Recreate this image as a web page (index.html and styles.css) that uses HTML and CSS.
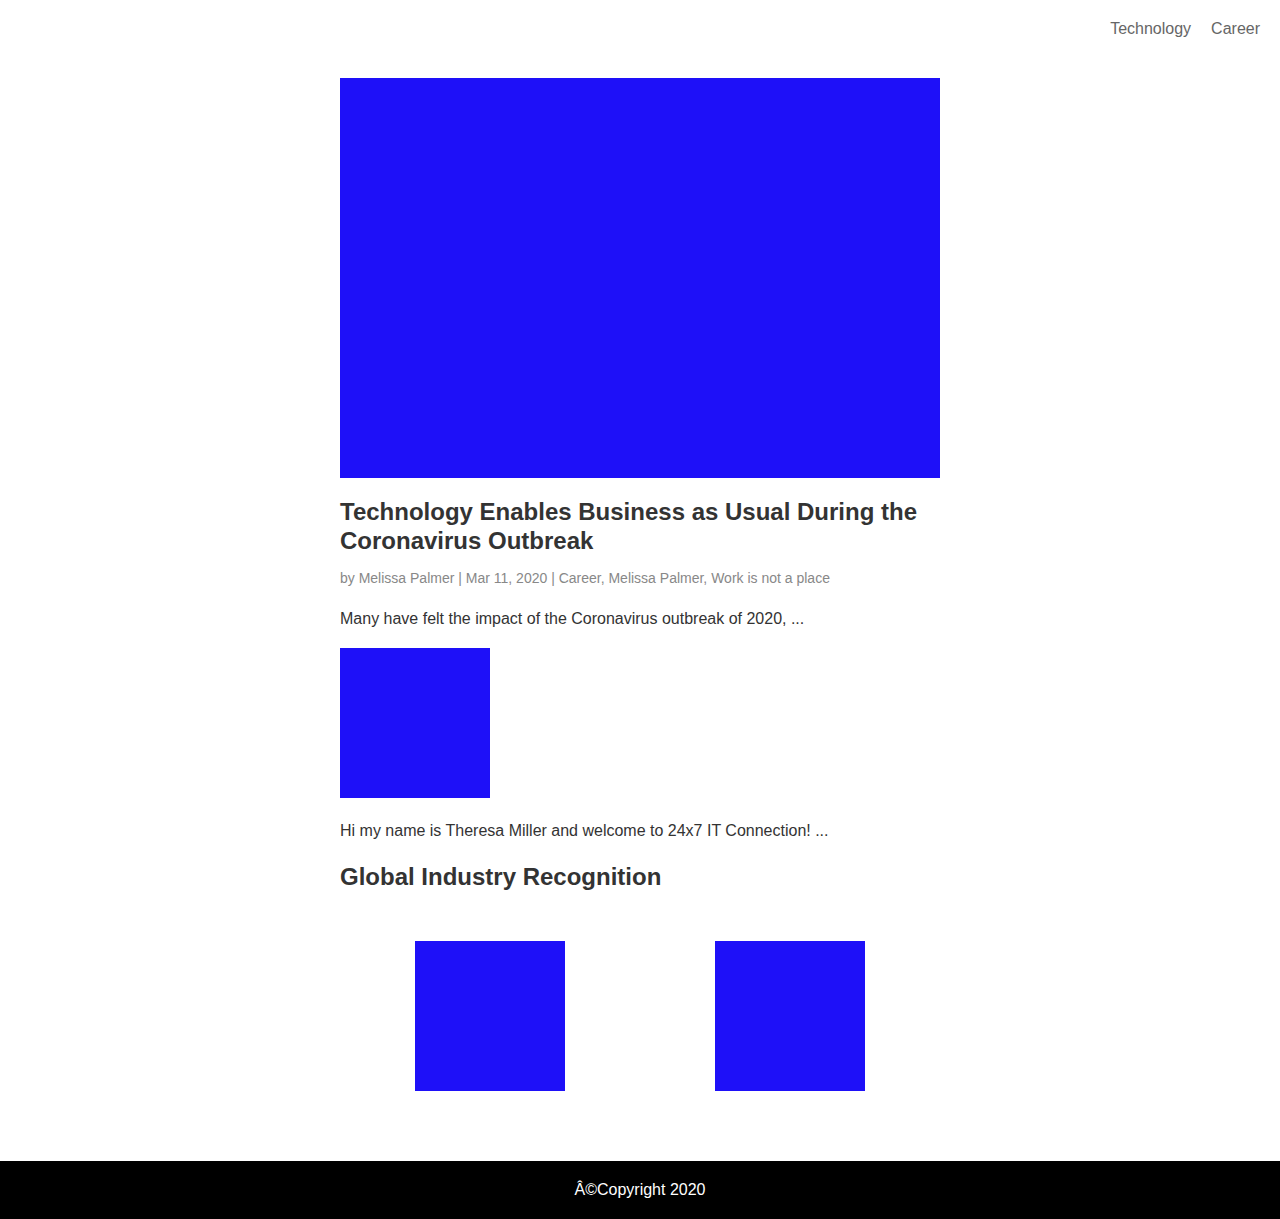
FILE: index.html
```html
<!DOCTYPE html>
<html>
<head>
<meta charset="utf-8">
<link rel="stylesheet" href="styles.css">
</head>
<body>
<header class="header">
  <nav class="nav">
    <a class="nav-link" href="#">Technology</a>
    <a class="nav-link" href="#">Career</a>
  </nav>
</header>
<main class="main">
  <article class="post">
    <div class="img hero"></div>
    <h2 class="title">Technology Enables Business as Usual During the Coronavirus Outbreak</h2>
    <p class="meta">by Melissa Palmer | Mar 11, 2020 | Career, Melissa Palmer, Work is not a place</p>
    <p class="excerpt">Many have felt the impact of the Coronavirus outbreak of 2020, ...</p>
  </article>
  <article class="post">
    <div class="img thumb"></div>
    <p class="excerpt second">Hi my name is Theresa Miller and welcome to 24x7 IT Connection! ...</p>
  </article>
  <h2 class="section-title">Global Industry Recognition</h2>
  <div class="badges">
    <div class="badge-col"><div class="img thumb"></div></div>
    <div class="badge-col"><div class="img thumb"></div></div>
  </div>
</main>
<footer class="footer">Â©Copyright 2020</footer>
</body>
</html>
```
FILE: styles.css
```css
html, body {
  margin: 0;
  padding: 0;
}
body {
  font-family: "Liberation Sans", Arial, Helvetica, sans-serif;
  color: #333;
  background: #fff;
}
.header {
  display: flex;
  justify-content: flex-end;
  height: 56px;
  padding-right: 20px;
}
.nav {
  display: flex;
  gap: 20px;
  padding-top: 20px;
}
.nav-link {
  font-size: 16px;
  line-height: 18px;
  color: #666;
  text-decoration: none;
}
.main {
  width: 600px;
  margin: 0 auto;
  padding-top: 22px;
  padding-bottom: 70px;
}
.img {
  background: #1e10f8;
}
.hero {
  width: 600px;
  height: 400px;
}
.thumb {
  width: 150px;
  height: 150px;
}
.title {
  font-size: 24px;
  line-height: 29px;
  font-weight: bold;
  color: #333;
  margin: 19px 0 0;
}
.meta {
  font-size: 14px;
  line-height: 17px;
  color: #888;
  margin: 15px 0 0;
}
.excerpt {
  font-size: 16px;
  line-height: 19px;
  color: #333;
  margin: 22px 0 20px;
}
.excerpt.second {
  margin-top: 23px;
  margin-bottom: 0;
}
.section-title {
  font-size: 24px;
  line-height: 29px;
  font-weight: bold;
  color: #333;
  margin: 22px 0 0;
}
.badges {
  display: grid;
  grid-template-columns: 1fr 1fr;
  margin-top: 50px;
}
.badge-col {
  display: flex;
  justify-content: center;
}
.footer {
  background: #000;
  color: #fff;
  height: 58px;
  display: flex;
  align-items: center;
  justify-content: center;
  font-size: 16px;
}
```
